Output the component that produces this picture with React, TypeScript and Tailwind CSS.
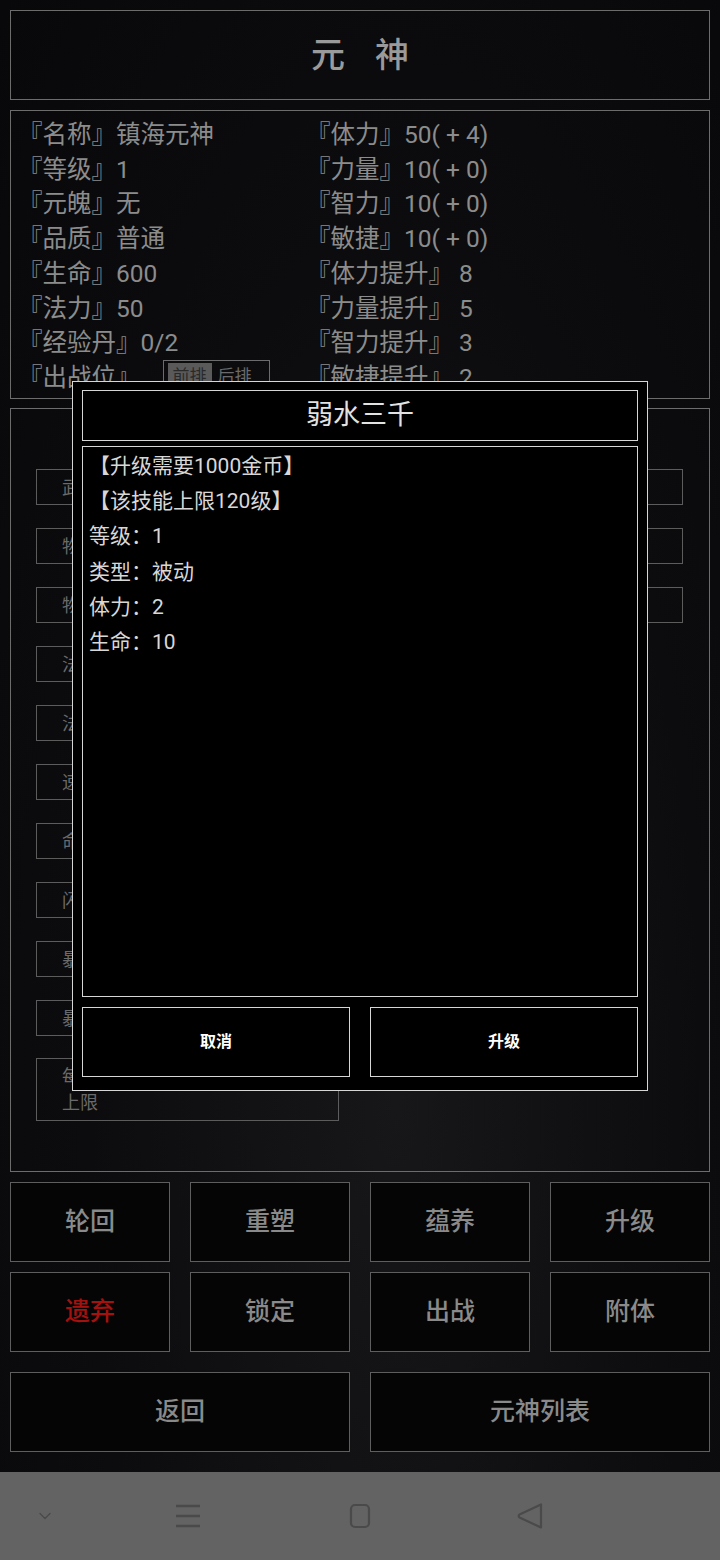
import { ChevronDown } from 'lucide-react';

const LEFT_INFO = [
  '『名称』镇海元神',
  '『等级』1',
  '『元魄』无',
  '『品质』普通',
  '『生命』600',
  '『法力』50',
  '『经验丹』0/2',
];

const RIGHT_INFO = [
  '『体力』50( + 4)',
  '『力量』10( + 0)',
  '『智力』10( + 0)',
  '『敏捷』10( + 0)',
  '『体力提升』 8',
  '『力量提升』 5',
  '『智力提升』 3',
  '『敏捷提升』 2',
];

const LEFT_SLOTS = ['武器', '物攻', '物防', '法攻', '法防', '速度', '命中', '闪避', '暴击', '暴伤'];

const SKILL_LINES = ['【升级需要1000金币】', '【该技能上限120级】', '等级：1', '类型：被动', '体力：2', '生命：10'];

const ACTIONS = [
  { label: '轮回' },
  { label: '重塑' },
  { label: '蕴养' },
  { label: '升级' },
  { label: '遗弃', danger: true },
  { label: '锁定' },
  { label: '出战' },
  { label: '附体' },
];

export default function App() {
  return (
    <div className="relative w-[720px] h-[1560px] overflow-hidden bg-[#0a0a0c] font-['Roboto','Noto_Sans_CJK_SC',sans-serif]">
      <div className="h-[1472px] flex flex-col px-[10px] pt-[10px] bg-[radial-gradient(ellipse_at_55%_75%,#17171a_0%,#0c0c0e_55%,#08080a_100%)]">
        {/* title */}
        <div className="h-[90px] border border-[#6c6c6c] flex items-center justify-center">
          <span className="text-[34px] font-medium text-[#9a9a9a] tracking-[30px] pl-[30px]">元神</span>
        </div>

        {/* info panel */}
        <div className="mt-[10px] h-[289px] border border-[#6c6c6c] overflow-hidden px-[7px] pt-[7px] text-[24.5px] leading-[34.7px] text-[#8c8c8c] flex">
          <div className="w-[288px] flex flex-col">
            {LEFT_INFO.map((t) => (
              <div key={t} className="whitespace-nowrap">{t}</div>
            ))}
            <div className="flex items-start whitespace-nowrap">
              <span>『出战位』</span>
              <div className="ml-[22px] -mt-[1px] h-[34px] w-[107px] border border-[#6c6c6c] flex items-start pt-[2px] pl-[4px] text-[17px] leading-[26px]">
                <span className="bg-[#5a5a5a] text-[#2a2a2a] px-[5px]">前排</span>
                <span className="px-[6px] text-[#6a6a6a]">后排</span>
              </div>
            </div>
          </div>
          <div className="flex flex-col">
            {RIGHT_INFO.map((t) => (
              <div key={t} className="whitespace-nowrap">{t}</div>
            ))}
          </div>
        </div>

        {/* attributes panel */}
        <div className="mt-[9px] h-[764px] border border-[#6c6c6c] px-[25px] pt-[60px] flex gap-[40px]">
          <div className="w-[303px] flex flex-col gap-[23px]">
            {LEFT_SLOTS.map((s) => (
              <div key={s} className="h-[36px] border border-[#5c5c5c] flex items-center pl-[25px] text-[18px] text-[#6a6a6a]">
                {s}
              </div>
            ))}
            <div className="-mt-[1px] h-[63px] border border-[#5c5c5c] flex flex-col justify-center pl-[25px] text-[18px] leading-[26px] text-[#6a6a6a]">
              <span>每级提升</span>
              <span>上限</span>
            </div>
          </div>
          <div className="w-[304px] flex flex-col gap-[23px]">
            {['暴击抵抗', '伤害加深', '伤害减免'].map((s) => (
              <div key={s} className="h-[36px] border border-[#5c5c5c] flex items-center pl-[25px] text-[18px] text-[#6a6a6a]">
                {s}
              </div>
            ))}
          </div>
        </div>

        {/* action buttons */}
        <div className="mt-[10px] grid grid-cols-4 gap-x-[20px] gap-y-[10px]">
          {ACTIONS.map((a) => (
            <div
              key={a.label}
              className={`h-[80px] border border-[#5e5e5e] bg-[#050506] flex items-center justify-center text-[25px] font-medium ${
                a.danger ? 'text-[#a3120f]' : 'text-[#8a8a8a]'
              }`}
            >
              {a.label}
            </div>
          ))}
        </div>
        <div className="mt-[20px] grid grid-cols-2 gap-x-[20px]">
          {['返回', '元神列表'].map((l) => (
            <div key={l} className="h-[80px] border border-[#5e5e5e] bg-[#050506] flex items-center justify-center text-[25px] font-medium text-[#8a8a8a]">
              {l}
            </div>
          ))}
        </div>
      </div>

      {/* system nav bar */}
      <div className="h-[88px] bg-[#636363] flex items-center pl-[35px]">
        <ChevronDown className="w-[20px] h-[20px] text-[#4a4a4a]" strokeWidth={1.6} />
        <svg width="26" height="26" viewBox="0 0 26 26" className="ml-[120px]">
          <path d="M1 3h24M1 13h24M1 23h24" stroke="#4a4a4a" strokeWidth="2.4" />
        </svg>
        <svg width="22" height="26" viewBox="0 0 22 26" className="ml-[148px]">
          <rect x="2" y="2" width="18" height="22" rx="4" fill="none" stroke="#4a4a4a" strokeWidth="2.2" />
        </svg>
        <svg width="28" height="28" viewBox="0 0 28 28" className="ml-[145px]">
          <path d="M25 2.5 L25 25.5 L3.5 15.5 Q1.8 14 3.5 12.5 Z" fill="none" stroke="#4a4a4a" strokeWidth="2.2" strokeLinejoin="round" />
        </svg>
      </div>

      {/* skill dialog */}
      <div className="absolute left-[72px] top-[381px] w-[576px] h-[710px] bg-black border-[1.5px] border-[#d6d6d6] px-[9px] pt-[8px] flex flex-col">
        <div className="h-[51px] border-[1.5px] border-[#d6d6d6] flex items-center justify-center text-[27px] text-[#e2e2e2]">
          弱水三千
        </div>
        <div className="mt-[5px] h-[551px] border-[1.5px] border-[#d6d6d6] px-[6px] pt-[2px] text-[21px] leading-[35.2px] text-[#d8d8d8]">
          {SKILL_LINES.map((l) => (
            <div key={l} className="whitespace-nowrap">{l}</div>
          ))}
        </div>
        <div className="mt-[10px] flex gap-[20px]">
          {['取消', '升级'].map((l) => (
            <div key={l} className="flex-1 h-[70px] border-[1.5px] border-[#d6d6d6] flex items-center justify-center text-[16px] font-bold text-white">
              {l}
            </div>
          ))}
        </div>
      </div>
    </div>
  );
}
